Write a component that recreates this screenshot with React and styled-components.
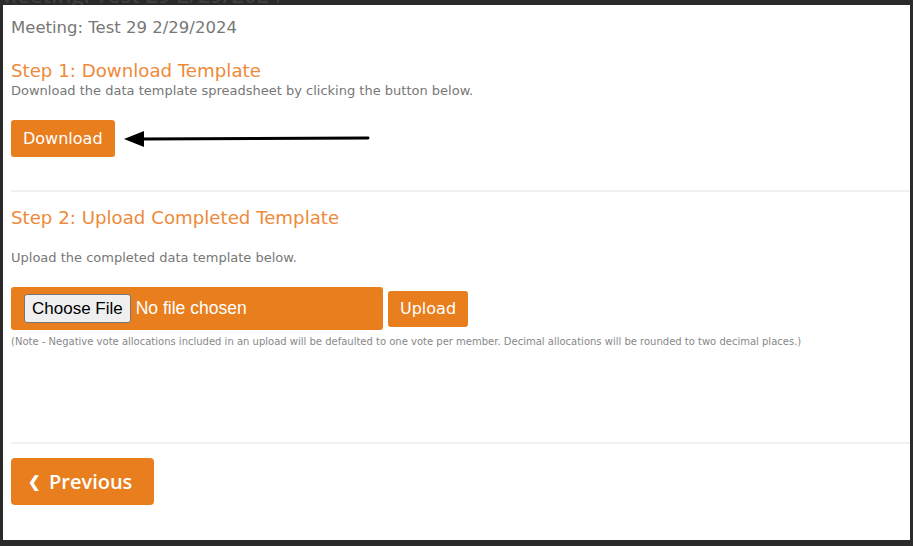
import React from 'react';
import styled, { createGlobalStyle } from 'styled-components';

const GlobalStyle = createGlobalStyle`
  html, body {
    margin: 0;
    padding: 0;
    background: #2a2a2a;
  }
  body {
    font-family: "DejaVu Sans", Verdana, sans-serif;
  }
`;

const orange = '#e87e1e';
const titleOrange = '#ee8a3a';

const Page = styled.div`
  width: 913px;
  height: 546px;
  box-sizing: border-box;
  padding: 0 3px 6px 3px;
  overflow: hidden;
`;

const Backdrop = styled.div`
  height: 5px;
  overflow: hidden;
`;

const BackTitle = styled.div`
  font-family: "Open Sans", sans-serif;
  font-size: 22px;
  font-weight: 600;
  line-height: 22px;
  color: #3e3e3e;
  margin-top: -17px;
  margin-left: -6px;
  white-space: nowrap;
`;

const Panel = styled.div`
  background: #fff;
  height: 535px;
  box-sizing: border-box;
  padding-left: 8px;
  display: flex;
  flex-direction: column;
  align-items: flex-start;
`;

const Meeting = styled.div`
  margin-top: 13px;
  font-size: 16.5px;
  line-height: 20px;
  color: #777;
`;

const StepTitle = styled.h3`
  margin: ${(p) => p.$top}px 0 0;
  font-size: 18.2px;
  font-weight: normal;
  line-height: 22px;
  color: ${titleOrange};
`;

const Hint = styled.p`
  margin: ${(p) => p.$top}px 0 0;
  font-size: 13px;
  line-height: 16px;
  color: #777;
`;

const ButtonRow = styled.div`
  display: flex;
  align-items: center;
  margin-top: 21px;
`;

const OrangeButton = styled.button`
  background: ${orange};
  color: #fff;
  border: none;
  border-radius: 3px;
  font-family: "DejaVu Sans", Verdana, sans-serif;
  font-size: 16px;
  height: ${(p) => p.$h}px;
  padding: 0 ${(p) => p.$px}px;
  cursor: pointer;
`;

const Arrow = styled.svg`
  margin-left: 9px;
  display: block;
`;

const Divider = styled.hr`
  align-self: stretch;
  border: none;
  height: 2px;
  background: #f0f0f0;
  margin: ${(p) => p.$top}px 0 0;
`;

const UploadRow = styled.div`
  display: flex;
  align-items: center;
  gap: 5px;
  margin-top: 21px;
`;

const FileBox = styled.div`
  background: ${orange};
  border-radius: 3px;
  width: 372px;
  height: 43px;
  box-sizing: border-box;
  padding-left: 13px;
  display: flex;
  align-items: center;
`;

const FileInput = styled.input`
  color: #fff;
  font-family: "Liberation Sans", Arial, sans-serif;
  font-size: 17.5px;

  &::file-selector-button {
    font-family: "Liberation Sans", Arial, sans-serif;
    font-size: 17px;
    color: #000;
    background: #efefef;
    border: 1px solid #767676;
    border-radius: 3px;
    height: 29px;
    padding: 0 7px;
    margin-right: 5px;
  }
`;

const Note = styled.p`
  margin: 5px 0 0;
  font-size: 10px;
  line-height: 14px;
  color: #888;
`;

const PrevButton = styled.button`
  margin-top: 14px;
  background: ${orange};
  color: #fff;
  border: none;
  border-radius: 4px;
  height: 47px;
  width: 143px;
  font-family: "Open Sans", sans-serif;
  font-size: 20px;
  font-weight: 600;
  display: flex;
  align-items: center;
  padding: 0 0 0 17px;
  gap: 8px;
`;

const Chevron = styled.span`
  font-size: 15px;
  line-height: 1;
`;

export default function App() {
  return (
    <>
      <GlobalStyle />
      <Page>
        <Backdrop>
          <BackTitle>Meeting: Test 29 2/29/2024</BackTitle>
        </Backdrop>
        <Panel>
          <Meeting>Meeting: Test 29 2/29/2024</Meeting>
          <StepTitle $top={22}>Step 1: Download Template</StepTitle>
          <Hint $top={1}>Download the data template spreadsheet by clicking the button below.</Hint>
          <ButtonRow>
            <OrangeButton $h={37} $px={12}>Download</OrangeButton>
            <Arrow width="246" height="20" viewBox="0 0 246 20">
              <line x1="16" y1="10" x2="244" y2="9" stroke="#000" strokeWidth="3" strokeLinecap="round" />
              <polygon points="0,10 20,2 20,18" fill="#000" />
            </Arrow>
          </ButtonRow>
          <Divider $top={33} />
          <StepTitle $top={15}>Step 2: Upload Completed Template</StepTitle>
          <Hint $top={21}>Upload the completed data template below.</Hint>
          <UploadRow>
            <FileBox>
              <FileInput type="file" />
            </FileBox>
            <OrangeButton $h={36} $px={12}>Upload</OrangeButton>
          </UploadRow>
          <Note>
            (Note - Negative vote allocations included in an upload will be defaulted to one vote per member. Decimal allocations will be rounded to two decimal places.)
          </Note>
          <Divider $top={93} />
          <PrevButton>
            <Chevron>❮</Chevron>
            <span>Previous</span>
          </PrevButton>
        </Panel>
      </Page>
    </>
  );
}
